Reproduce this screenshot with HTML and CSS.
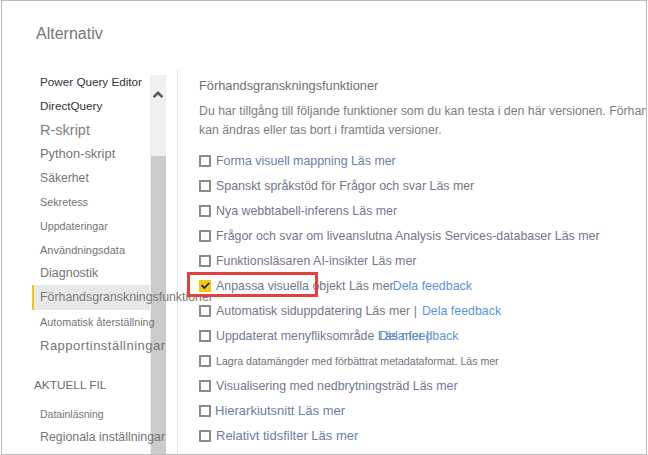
FILE: index.html
```html
<!DOCTYPE html>
<html lang="sv">
<head>
<meta charset="utf-8">
<title>Alternativ</title>
<link rel="stylesheet" href="styles.css">
</head>
<body>
<div class="window">
  <header class="title-bar"><h1 class="title">Alternativ</h1></header>
  <div class="main">
    <nav class="sidenav">
      <ul class="nav-list">
        <li class="nav-item dark s-pqe">Power Query Editor</li>
        <li class="nav-item dark s-pqe">DirectQuery</li>
        <li class="nav-item light s-r">R-skript</li>
        <li class="nav-item s-py">Python-skript</li>
        <li class="nav-item s-sak">Säkerhet</li>
        <li class="nav-item s-sek">Sekretess</li>
        <li class="nav-item s-upd">Uppdateringar</li>
        <li class="nav-item s-anv">Användningsdata</li>
        <li class="nav-item s-diag short">Diagnostik</li>
        <li class="nav-item selected s-forh">Förhandsgranskningsfunktioner</li>
        <li class="nav-item s-auto">Automatisk återställning</li>
        <li class="nav-item s-rapp">Rapportinställningar</li>
        <li class="nav-heading">AKTUELL FIL</li>
        <li class="nav-item s-data after-heading">Datainläsning</li>
        <li class="nav-item s-reg last">Regionala inställningar</li>
      </ul>
      <div class="scrollbar">
        <div class="scroll-up">
          <svg width="16" height="9" viewBox="0 0 16 9"><path d="M3.6 7.2 L8 2.8 L12.4 7.2" fill="none" stroke="#575757" stroke-width="2.4" stroke-linejoin="miter"/></svg>
        </div>
        <div class="scroll-thumb"></div>
      </div>
    </nav>
    <section class="content">
      <h2 class="section-title">Förhandsgranskningsfunktioner</h2>
      <p class="intro">Du har tillgång till följande funktioner som du kan testa i den här versionen. Förhandsgranskningsfunktionerna<br>kan ändras eller tas bort i framtida versioner.</p>
      <ul class="features">
        <li class="feature blue"><span class="checkbox"></span><span class="label">Forma visuell mappning Läs mer</span></li>
        <li class="feature"><span class="checkbox"></span><span class="label">Spanskt språkstöd för Frågor och svar Läs mer</span></li>
        <li class="feature"><span class="checkbox"></span><span class="label">Nya webbtabell-inferens Läs mer</span></li>
        <li class="feature"><span class="checkbox"></span><span class="label">Frågor och svar om liveanslutna Analysis Services-databaser Läs mer</span></li>
        <li class="feature"><span class="checkbox"></span><span class="label">Funktionsläsaren AI-insikter Läs mer</span></li>
        <li class="feature">
          <span class="checkbox checked"><svg width="12" height="12" viewBox="0 0 12 12"><path d="M2.6 5.2 L5.3 8 L10.2 3" fill="none" stroke="#1c1c1c" stroke-width="1.7"/></svg></span>
          <span class="label">Anpassa visuella objekt Läs mer</span><span class="link link-tight">Dela feedback</span>
          <span class="highlight-box"></span>
        </li>
        <li class="feature"><span class="checkbox"></span><span class="label">Automatisk siduppdatering Läs mer |</span><span class="link link-gap">Dela feedback</span></li>
        <li class="feature slate"><span class="checkbox"></span><span class="label">Uppdaterat menyfliksområde Läs mer |</span><span class="link link-overlap">Dela feedback</span></li>
        <li class="feature small"><span class="checkbox"></span><span class="label">Lagra datamängder med förbättrat metadataformat. Läs mer</span></li>
        <li class="feature slate"><span class="checkbox"></span><span class="label">Visualisering med nedbrytningsträd Läs mer</span></li>
        <li class="feature blue large"><span class="checkbox"></span><span class="label label-tight">Hierarkiutsnitt Läs mer</span></li>
        <li class="feature blue large"><span class="checkbox"></span><span class="label">Relativt tidsfilter Läs mer</span></li>
      </ul>
    </section>
  </div>
</div>
</body>
</html>
```

FILE: styles.css
```css
* { box-sizing: border-box; }

html, body {
  margin: 0;
  padding: 0;
  background: #ffffff;
}

body {
  font-family: "Liberation Sans", Arial, sans-serif;
  color: #737373;
}

ul { list-style: none; margin: 0; padding: 0; }

.window {
  margin-left: 1px;
  width: 646px;
  height: 455px;
  border: 1px solid #bdbdbd;
  overflow: hidden;
  display: flex;
  flex-direction: column;
}

.title-bar {
  height: 69px;
  flex: none;
  padding: 23px 0 0 34px;
}

.title {
  margin: 0;
  font-size: 16px;
  line-height: 20px;
  font-weight: normal;
  color: #777777;
}

.main {
  flex: 1;
  display: flex;
  min-height: 0;
}

/* ---------- left navigation ---------- */
.sidenav {
  width: 175px;
  flex: none;
  display: flex;
  padding-left: 30px;
  padding-right: 11px;
}

.nav-list {
  width: 118px;
  flex: none;
  position: relative;
  z-index: 1;
}

.nav-item {
  height: 24px;
  line-height: 24px;
  padding-left: 8px;
  white-space: nowrap;
  color: #757575;
}

.nav-item.dark { color: #33333b; }
.nav-item.light { color: #808080; }
.nav-item.short { height: 23px; line-height: 23px; }

.nav-item.selected {
  height: 25px;
  line-height: 25px;
  background: #e8e8e8;
  border-left: 2px solid #f2c811;
  padding-left: 6px;
  color: #787878;
}

.nav-heading {
  margin-top: 16px;
  height: 23px;
  line-height: 23px;
  padding-left: 2px;
  font-size: 11.8px;
  color: #6b6b6b;
}

.nav-item.after-heading { margin-top: 6px; height: 23px; line-height: 23px; }
.nav-item.last { height: 22px; line-height: 22px; }

.s-pqe { font-size: 11.7px; }
.s-r { font-size: 14.5px; }
.s-py { font-size: 12.9px; }
.s-sak { font-size: 12.2px; }
.s-sek { font-size: 10.8px; }
.s-upd { font-size: 10.7px; }
.s-anv { font-size: 11px; }
.s-diag { font-size: 12.5px; }
.s-forh { font-size: 12.35px; }
.s-auto { font-size: 10.8px; }
.s-rapp { font-size: 13px; letter-spacing: 0.5px; }
.s-data { font-size: 10.5px; }
.s-reg { font-size: 12.36px; }

.scrollbar {
  width: 16px;
  flex: none;
  margin-top: 5px;
  background: #f0f0f0;
  display: flex;
  flex-direction: column;
}

.scroll-up {
  height: 81px;
  flex: none;
  padding-top: 15px;
  display: flex;
  justify-content: center;
  align-items: flex-start;
}

.scroll-up svg { display: block; }

.scroll-thumb {
  flex: 1;
  margin-left: 1px;
  background: #cbcbcb;
}

/* ---------- content ---------- */
.content {
  flex: 1;
  min-width: 0;
  border-left: 1px solid #e4e4e4;
  padding: 7px 0 0 21px;
  overflow: hidden;
}

.section-title {
  margin: 0;
  font-size: 12.8px;
  line-height: 18px;
  font-weight: normal;
  color: #707070;
  white-space: nowrap;
}

.intro {
  margin: 7px 0 0;
  font-size: 12.3px;
  line-height: 19px;
  color: #7d7d84;
  white-space: nowrap;
}

.features { margin-top: 8px; }

.feature {
  position: relative;
  height: 25px;
  display: flex;
  align-items: center;
  white-space: nowrap;
  font-size: 12.4px;
  color: #75778a;
}

.feature.blue { color: #6b7ea5; }
.feature.slate { color: #717993; }
.feature.small { font-size: 10.6px; color: #72727c; }
.feature.large { font-size: 13px; }

.checkbox {
  width: 12px;
  height: 12px;
  flex: none;
  border: 2px solid #8b8b8b;
  margin-right: 5px;
}

.checkbox.checked {
  border: none;
  background: #f2c811;
}

.checkbox.checked svg { display: block; }

.label-tight { margin-left: -1px; }

.link { color: #5a96d8; }
.link-tight { margin-left: -1px; }
.link-gap { margin-left: 5px; }
.link-overlap { margin-left: -50px; }

.highlight-box {
  position: absolute;
  left: -12px;
  top: -1px;
  width: 131px;
  height: 25px;
  border: 3px solid #e4403d;
  z-index: 2;
}
```
